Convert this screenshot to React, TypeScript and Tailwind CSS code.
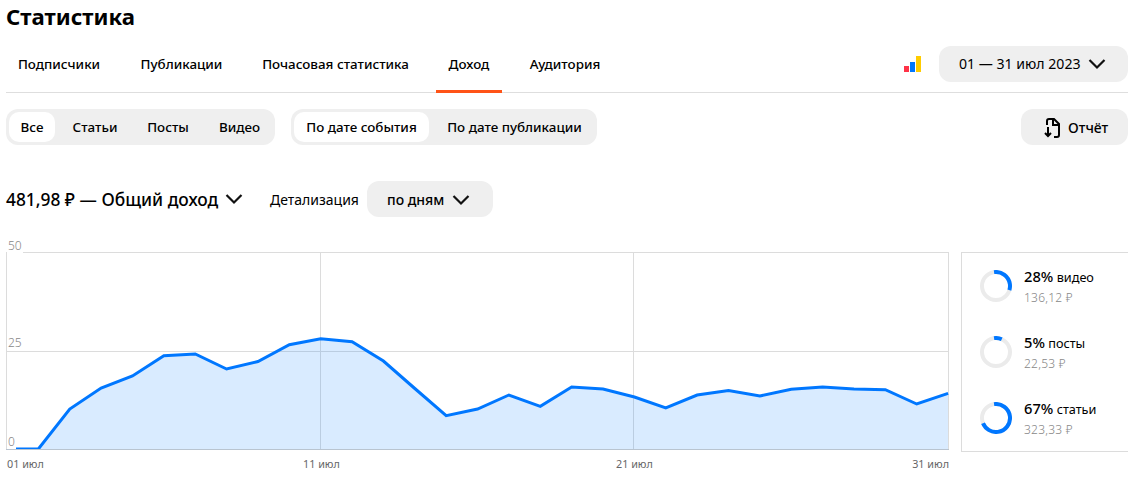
import React from 'react';
import { clsx } from 'clsx';

const tabs = [
  { label: 'Подписчики', className: 'w-[106px]' },
  { label: 'Публикации', className: 'w-[107px]' },
  { label: 'Почасовая статистика', className: 'w-[169px]' },
  { label: 'Доход', className: 'w-[66px]', active: true },
  { label: 'Аудитория', className: 'w-[94px]' },
];

const typeFilters = [
  { label: 'Все', className: 'w-[46px]', active: true },
  { label: 'Статьи', className: 'w-[74px]' },
  { label: 'Посты', className: 'w-[72px]' },
  { label: 'Видео', className: 'w-[71px]' },
];

const dateFilters = [
  { label: 'По дате события', className: 'w-[135px]', active: true },
  { label: 'По дате публикации', className: 'w-[165px]' },
];

const shares = [
  { percent: 28, label: 'видео', amount: '136,12 ₽' },
  { percent: 5, label: 'посты', amount: '22,53 ₽' },
  { percent: 67, label: 'статьи', amount: '323,33 ₽' },
];

// line heights for every day of the month, in chart pixels from the top
const days = [
  197, 197, 157, 136, 124, 103.7, 102, 117, 109.5, 92.7, 86.7, 89.7, 109, 136.5, 163.7, 157, 143, 154.3, 135, 137, 145,
  156, 143, 138.5, 144, 137.3, 135, 137, 137.7, 152, 141.3,
];

const line = days.map((y, i) => `${(1 + i * 31.37).toFixed(2)},${y}`).join(' ');

const Chevron = () => (
  <svg width="18" height="12" viewBox="0 0 18 12" fill="none" className="shrink-0">
    <path d="M1.5 2 9 9.5 16.5 2" stroke="#111" strokeWidth="2.2" />
  </svg>
);

const Segmented: React.FC<{ items: { label: string; className: string; active?: boolean }[] }> = ({ items }) => (
  <div className="flex h-9 rounded-xl bg-[#efefef] py-[3px] text-[13.4px] font-medium">
    {items.map((item) => (
      <button
        key={item.label}
        className={clsx(
          'flex items-center justify-center whitespace-nowrap',
          item.className,
          item.active && 'mx-[3px] rounded-[10px] bg-white',
        )}
      >
        {item.label}
      </button>
    ))}
  </div>
);

const Ring: React.FC<{ percent: number }> = ({ percent }) => (
  <svg width="32" height="32" viewBox="0 0 32 32" fill="none" className="shrink-0">
    <circle cx="16" cy="16" r="14" stroke="#ebebeb" strokeWidth="4" />
    <circle
      cx="16"
      cy="16"
      r="14"
      stroke="#0077ff"
      strokeWidth="4"
      pathLength="100"
      strokeDasharray={`${percent + 4} 100`}
      transform="rotate(-98 16 16)"
    />
  </svg>
);

const IncomeChart = () => (
  <div className="relative h-[198px] w-[943px] shrink-0">
    <svg width="943" height="198" viewBox="0 0 943 198" fill="none">
      <path
        d="M0 .5H943M0 99.5H943M0 197.5H943M.5 0V198M314.5 0V198M627.5 0V198M942.5 0V198"
        stroke="#dcdcdc"
      />
      <polygon points={`1,198 ${line} 942,198`} fill="#0077ff" fillOpacity="0.15" />
      <polyline points={line} stroke="#0077ff" strokeWidth="3" />
      <path d="M0 197.5H943" stroke="#b9c4d0" />
    </svg>
    <span className="absolute -top-3.5 left-px bg-white px-px text-xs leading-[15px] font-light text-[#888]">50</span>
    <span className="absolute top-[84px] left-px bg-white px-px text-xs leading-[14px] font-light text-[#888]">25</span>
    <span className="absolute top-[182px] left-px bg-white px-px text-xs leading-[15px] font-light text-[#888]">0</span>
  </div>
);

export default function App() {
  return (
    <main className="h-[478px] w-[1128px] overflow-hidden bg-white pl-1.5 font-['Noto_Sans','Open_Sans',sans-serif] text-black">
      <h1 className="h-9 text-[22.2px] leading-[34px] font-bold">Статистика</h1>

      <div className="flex h-[57px] items-start justify-between border-b border-[#dedede]">
        <nav className="flex h-[57px] gap-4 text-[13.4px] font-medium">
          {tabs.map((tab) => (
            <button
              key={tab.label}
              className={clsx(
                'flex h-[57px] items-center justify-center border-b-3 pt-0.5 whitespace-nowrap',
                tab.className,
                tab.active ? 'border-[#ff5317]' : 'border-transparent',
              )}
            >
              {tab.label}
            </button>
          ))}
        </nav>
        <div className="mt-2.5 flex items-center gap-[17px]">
          <svg width="18" height="16" viewBox="0 0 18 16">
            <path d="M0 10h5v6H0z" fill="#ff3347" />
            <path d="M6 6h5v10H6z" fill="#0077ff" />
            <path d="M12 0h5v16h-5z" fill="#ffcc00" />
          </svg>
          <button className="flex h-9 w-[189px] items-center gap-[7px] rounded-xl bg-[#efefef] pl-5 text-[14.1px] whitespace-nowrap">
            01 — 31 июл 2023
            <Chevron />
          </button>
        </div>
      </div>

      <div className="mt-4 flex h-9 gap-4">
        <Segmented items={typeFilters} />
        <Segmented items={dateFilters} />
        <button className="ml-auto flex h-9 w-[107px] items-center gap-[7px] rounded-xl bg-[#efefef] pt-px pl-[23px] text-sm font-medium">
          <svg width="17" height="20" viewBox="0 0 17 20" fill="none" stroke="#000" strokeWidth="2">
            <path d="M3 7V3Q3 1 5 1H10L15 6V17Q15 19 13 19H10" />
            <path d="M9 1V7H15M4 9V18M1 15L4 18L7 15" />
          </svg>
          Отчёт
        </button>
      </div>

      <div className="mt-9 flex h-9 items-center">
        <button className="flex w-[264px] items-center gap-[7px] text-[17.35px] font-medium whitespace-nowrap">
          481,98 ₽ — Общий доход
          <Chevron />
        </button>
        <span className="w-[97px] pt-px text-sm">Детализация</span>
        <button className="flex h-9 w-[126px] items-center gap-2 rounded-xl bg-[#efefef] pt-px pl-5 text-sm font-medium whitespace-nowrap">
          по дням
          <Chevron />
        </button>
      </div>

      <div className="mt-[35px] flex items-start gap-3">
        <div>
          <IncomeChart />
          <div className="mt-1.5 flex h-4 text-[10.8px] leading-4 text-[#666]">
            <span className="w-[296px] pl-px">01 июл</span>
            <span className="w-[314px] pl-px">11 июл</span>
            <span>21 июл</span>
            <span className="ml-auto">31 июл</span>
          </div>
        </div>
        <div className="flex h-[200px] grow flex-col gap-[26px] border border-r-0 border-[#dcdcdc] pt-[13px] pl-[18px]">
          {shares.map((share) => (
            <div key={share.label} className="flex h-10 items-center gap-3">
              <Ring percent={share.percent} />
              <div className="whitespace-nowrap">
                <p className="text-[12.7px] leading-5">
                  <span className="text-[14.7px] font-medium">{share.percent}%</span> {share.label}
                </p>
                <p className="pt-px text-xs leading-[19px] font-light tracking-[0.02em] text-[#888]">{share.amount}</p>
              </div>
            </div>
          ))}
        </div>
      </div>
    </main>
  );
}
